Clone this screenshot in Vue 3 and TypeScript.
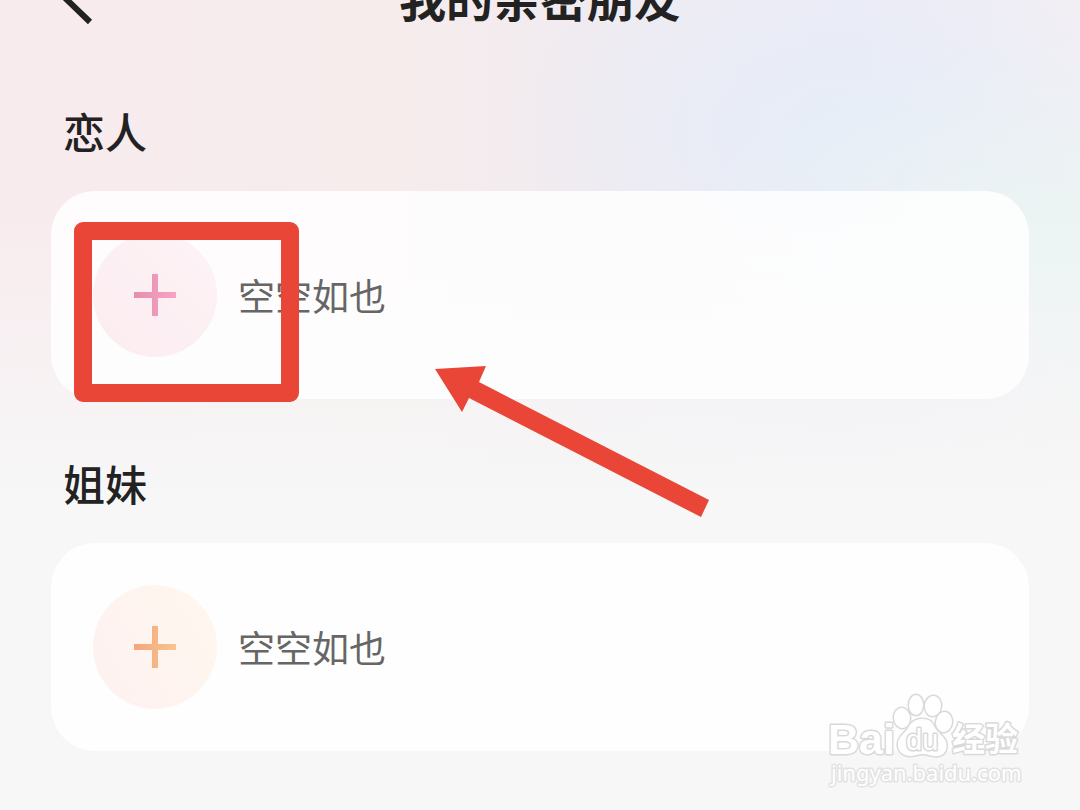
<script setup lang="ts">
interface FriendGroup {
  id: string
  title: string
  empty: string
  highlighted: boolean
}

const groups: FriendGroup[] = [
  { id: 'lover', title: '恋人', empty: '空空如也', highlighted: true },
  { id: 'sister', title: '姐妹', empty: '空空如也', highlighted: false },
]
</script>

<template>
  <div class="page">
    <header class="bar">
      <button class="back" type="button" aria-label="返回">
        <svg viewBox="0 0 40 60" aria-hidden="true">
          <path d="M33 0 L5 28 L33 55" />
        </svg>
      </button>
      <h1 class="title">我的亲密朋友</h1>
    </header>

    <main class="groups">
      <section v-for="group in groups" :key="group.id" class="group" :class="group.id">
        <h2 class="heading">{{ group.title }}</h2>
        <div class="card">
          <button class="add" type="button" :aria-label="'添加' + group.title">
            <svg viewBox="0 0 44 44" aria-hidden="true">
              <defs>
                <linearGradient :id="'plus-' + group.id" x1="0" y1="0" x2="1" y2="0">
                  <stop class="from" offset="0" />
                  <stop class="to" offset="1" />
                </linearGradient>
              </defs>
              <path
                :fill="`url(#plus-${group.id})`"
                d="M19 1h6v18h18v6H25v18h-6V25H1v-6h18z"
              />
            </svg>
          </button>
          <span class="empty">{{ group.empty }}</span>
          <template v-if="group.highlighted">
            <div class="frame"></div>
            <svg class="arrow" viewBox="0 0 276 154" aria-hidden="true">
              <path d="M1 5 L52 2 L45 18 L275 136 L267 153 L35 34 L28 48 Z" />
            </svg>
          </template>
        </div>
      </section>
    </main>

    <svg class="watermark" viewBox="0 0 204 100" role="img" aria-label="Baidu 经验">
      <g class="mark">
        <text class="latin" x="3" y="64">Bai</text>
        <ellipse cx="77" cy="28" rx="8" ry="10" transform="rotate(-6 77 28)" />
        <ellipse cx="91" cy="15" rx="7" ry="10" />
        <ellipse cx="108" cy="16" rx="8" ry="10" transform="rotate(6 108 16)" />
        <ellipse cx="119" cy="32" rx="8" ry="10" transform="rotate(8 119 32)" />
        <path
          d="M97 29c-8 0-11 4-14 9-4 6-9 8-10 15-1 8 5 13 12 13 5 0 8-2 13-2s9 3 15 2c7-1 10-7 8-14-2-6-8-9-11-14-3-6-5-9-13-9z"
        />
        <text class="du" x="81" y="60">du</text>
        <text class="cjk" x="127" y="61">经验</text>
        <text class="site" x="6" y="91">jingyan.baidu.com</text>
      </g>
    </svg>
  </div>
</template>

<style>
body {
  margin: 0;
}
</style>

<style scoped>
.page {
  position: relative;
  box-sizing: border-box;
  min-height: 100vh;
  padding: 0 51px 59px;
  overflow: hidden;
  font-family: "Noto Sans CJK SC", "Noto Sans", sans-serif;
  color: #222;
  background:
    linear-gradient(180deg, rgba(247, 247, 247, 0) 0%, rgba(247, 247, 247, 0) 26%, #f7f7f7 62%),
    radial-gradient(ellipse 400px 220px at 100% 32%, #ebf5f3 0%, rgba(235, 245, 243, 0) 100%),
    radial-gradient(ellipse 340px 200px at 78% 16%, #e6edf8 0%, rgba(230, 237, 248, 0) 100%),
    linear-gradient(90deg, #f8ebee 0%, #f6ecec 36%, #f0ebf1 58%, #edebf6 78%, #f3eff4 100%);
}

.bar {
  position: relative;
  display: flex;
  align-items: center;
  justify-content: center;
  height: 88px;
  margin-top: -47px;
}

.title {
  margin: 0;
  font-size: 47px;
  line-height: 70px;
  font-weight: 700;
}

.back {
  position: absolute;
  left: 6px;
  top: 14px;
  padding: 0;
  border: 0;
  background: none;
}

.back svg {
  display: block;
  width: 40px;
  height: 60px;
  fill: none;
  stroke: #222;
  stroke-width: 6;
}

.groups {
  display: flex;
  flex-direction: column;
  padding-top: 6px;
}

.heading {
  margin: 0;
  padding: 52px 12px 28px;
  font-size: 42px;
  line-height: 64px;
  font-weight: 500;
}

.card {
  position: relative;
  display: flex;
  align-items: center;
  gap: 21px;
  box-sizing: border-box;
  min-height: 208px;
  padding: 40px 42px;
  border-radius: 44px;
  background: rgba(255, 255, 255, 0.82);
}

.add {
  display: flex;
  align-items: center;
  justify-content: center;
  width: 124px;
  height: 124px;
  padding: 0;
  border: 0;
  border-radius: 50%;
}

.add svg {
  width: 44px;
  height: 44px;
}

.lover .add {
  background: linear-gradient(45deg, #fcecf0, #fdf3f6);
}

.sister .add {
  background: linear-gradient(60deg, #fef1f1, #fff7ee);
}

.lover .from {
  stop-color: #e58fb0;
}

.lover .to {
  stop-color: #f7a3c4;
}

.sister .from {
  stop-color: #f3a67f;
}

.sister .to {
  stop-color: #f8c48c;
}

.empty {
  font-size: 37px;
  line-height: 56px;
  color: #666;
}

.frame {
  position: absolute;
  left: 23px;
  top: 31px;
  box-sizing: border-box;
  width: 225px;
  height: 180px;
  border: 18px solid #e94638;
  border-radius: 9px;
}

.arrow {
  position: absolute;
  left: 383px;
  top: 173px;
  width: 276px;
  height: 154px;
  fill: #e94638;
}

.watermark {
  position: absolute;
  right: 51px;
  bottom: 20px;
  width: 204px;
  height: 100px;
}

.mark {
  fill: #fff;
  stroke: #d9d9d9;
  stroke-width: 3;
  stroke-linejoin: round;
  paint-order: stroke;
}

.latin {
  font: 700 43px "Liberation Sans", sans-serif;
}

.du {
  font: 400 29px "Liberation Sans", sans-serif;
}

.cjk {
  font: 700 33px "Noto Sans CJK SC", sans-serif;
}

.site {
  font: 400 22px "Noto Sans", sans-serif;
  stroke: #e2e2e2;
}
</style>
